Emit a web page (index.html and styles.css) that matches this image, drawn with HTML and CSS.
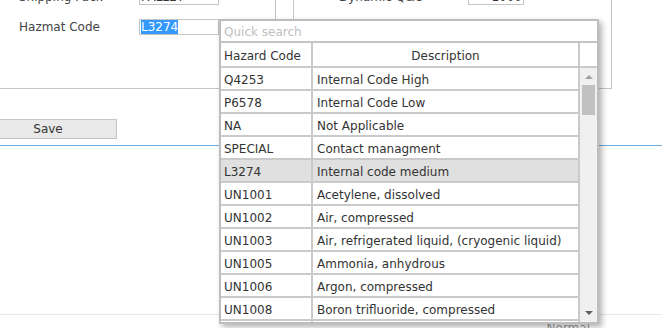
FILE: index.html
```html
<!DOCTYPE html>
<html lang="en">
<head>
  <meta charset="UTF-8" />
  <title>Hazmat Code Lookup</title>
  <link rel="stylesheet" href="styles.css">
</head>
<body>

  <div class="panels">
    <div class="panel panel-left">
      <div class="field">
        <span class="label">Shipping Pack</span>
        <div class="input">PALLET</div>
      </div>
      <div class="field">
        <span class="label">Hazmat Code</span>
        <div class="input"><span class="selected">L3274</span></div>
      </div>
    </div>
    <div class="panel panel-right">
      <div class="field">
        <span class="label label-wide">Dynamic Q&amp;O</span>
        <div class="input input-num">1000</div>
      </div>
    </div>
  </div>

  <div class="actions">
    <button class="btn">Save</button>
  </div>

  <div class="tabline"></div>

  <div class="footer">
    <span class="status">Normal</span>
  </div>

  <!-- lookup popup for the hazmat code field -->
  <div class="lookup">
    <div class="lookup-search">Quick search</div>
    <div class="lookup-head">
      <div class="col-code">Hazard Code</div>
      <div class="col-desc">Description</div>
      <div class="col-bar"></div>
    </div>
    <div class="lookup-body">
      <div class="rows">
        <div class="row"><div class="col-code">Q4253</div><div class="col-desc">Internal Code High</div></div>
        <div class="row"><div class="col-code">P6578</div><div class="col-desc">Internal Code Low</div></div>
        <div class="row"><div class="col-code">NA</div><div class="col-desc">Not Applicable</div></div>
        <div class="row"><div class="col-code">SPECIAL</div><div class="col-desc">Contact managment</div></div>
        <div class="row active"><div class="col-code">L3274</div><div class="col-desc">Internal code medium</div></div>
        <div class="row"><div class="col-code">UN1001</div><div class="col-desc">Acetylene, dissolved</div></div>
        <div class="row"><div class="col-code">UN1002</div><div class="col-desc">Air, compressed</div></div>
        <div class="row"><div class="col-code">UN1003</div><div class="col-desc">Air, refrigerated liquid, (cryogenic liquid)</div></div>
        <div class="row"><div class="col-code">UN1005</div><div class="col-desc">Ammonia, anhydrous</div></div>
        <div class="row"><div class="col-code">UN1006</div><div class="col-desc">Argon, compressed</div></div>
        <div class="row"><div class="col-code">UN1008</div><div class="col-desc">Boron trifluoride, compressed</div></div>
        <div class="row"><div class="col-code">UN1009</div><div class="col-desc">Bromotrifluoromethane</div></div>
      </div>
      <div class="vscroll">
        <div class="arrow arrow-up"></div>
        <div class="thumb"></div>
        <div class="arrow arrow-down"></div>
      </div>
    </div>
  </div>

</body>
</html>
```

FILE: styles.css
```css
body {
  margin: 0;
  width: 662px;
  height: 328px;
  overflow: hidden;
  position: relative;
  background: #fff;
  font-family: "DejaVu Sans", Verdana, sans-serif;
  font-size: 12px;
  color: #333;
}

.panels {
  display: flex;
  margin-top: -40px;
}

.panel {
  height: 129px;
  padding-top: 29px;
  box-sizing: border-box;
  border-bottom: 1px solid #c4c4c4;
}

.panel-left {
  width: 276px;
  border-right: 1px solid #c4c4c4;
}

.panel-right {
  width: 319px;
  margin-left: 17px;
  border-left: 1px solid #c4c4c4;
  border-right: 1px solid #c4c4c4;
}

.field {
  display: flex;
  align-items: center;
  height: 16px;
  margin-bottom: 14px;
  padding-left: 19px;
}

.panel-right .field {
  padding-left: 45px;
}

.label {
  width: 120px;
  color: #444;
}

.label-wide {
  width: 129px;
}

.input {
  width: 80px;
  height: 16px;
  box-sizing: border-box;
  border: 1px solid #c4c4c4;
  padding: 0 1px;
  line-height: 14px;
  color: #333;
  white-space: nowrap;
  overflow: hidden;
}

.input-num {
  width: 56px;
  text-align: right;
}

.selected {
  background: #3399ff;
  color: #fff;
  display: inline-block;
  line-height: 14px;
}

.actions {
  margin-top: 30px;
}

.btn {
  margin: 0 0 0 -21px;
  width: 138px;
  height: 20px;
  background: #e9e9e9;
  border: 1px solid #c4c4c4;
  font-family: inherit;
  font-size: 12px;
  color: #333;
  padding: 0;
  display: block;
}

.tabline {
  margin-top: 6px;
  border-top: 1px solid #6daee2;
  height: 168px;
  border-bottom: 1px solid #e8e8e8;
}

.footer {
  display: flex;
  justify-content: flex-end;
  padding-right: 72px;
}

.status {
  margin-top: 6px;
  color: #999;
}

/* lookup popup */
.lookup {
  position: absolute;
  left: 219px;
  top: 19px;
  width: 380px;
  height: 305px;
  box-sizing: border-box;
  border: 2px solid #bdbdbd;
  background: #fff;
  box-shadow: 3px 3px 6px rgba(0, 0, 0, 0.3);
  overflow: hidden;
  display: flex;
  flex-direction: column;
}

.lookup-search {
  height: 18px;
  padding: 2px 0 0 3px;
  line-height: 18px;
  color: #c0c0c0;
  border-bottom: 2px solid #c4c4c4;
  flex-shrink: 0;
}

.lookup-head {
  display: flex;
  height: 23px;
  border-bottom: 2px solid #cacaca;
  flex-shrink: 0;
}

.col-code {
  width: 92px;
  padding-left: 3px;
  box-sizing: border-box;
  border-right: 2px solid #cacaca;
  flex-shrink: 0;
  white-space: nowrap;
}

.col-desc {
  width: 267px;
  padding-left: 4px;
  box-sizing: border-box;
  border-right: 2px solid #cacaca;
  flex-shrink: 0;
  white-space: nowrap;
}

.lookup-head .col-code,
.lookup-head .col-desc {
  padding-top: 4px;
  line-height: 19px;
}

.lookup-head .col-desc {
  text-align: center;
  padding-left: 0;
}

.col-bar {
  flex: 1;
}

.lookup-body {
  display: flex;
  flex: 1;
  min-height: 0;
}

.rows {
  width: 359px;
}

.row {
  display: flex;
  height: 21px;
  line-height: 17px;
  border-bottom: 2px solid #cacaca;
}

.row .col-code,
.row .col-desc {
  padding-top: 4px;
}

.row.active {
  background: #e0e0e0;
}

.vscroll {
  flex: 1;
  background: #f0f0f0;
  display: flex;
  flex-direction: column;
  align-items: center;
}

.arrow {
  width: 0;
  height: 0;
  border-left: 4px solid transparent;
  border-right: 4px solid transparent;
}

.arrow-up {
  margin-top: 7px;
  border-bottom: 4px solid #a0a0a0;
}

.thumb {
  margin-top: 6px;
  width: 13px;
  height: 30px;
  background: #c1c1c1;
}

.arrow-down {
  margin-top: auto;
  margin-bottom: 7px;
  border-top: 4px solid #606060;
}
```
